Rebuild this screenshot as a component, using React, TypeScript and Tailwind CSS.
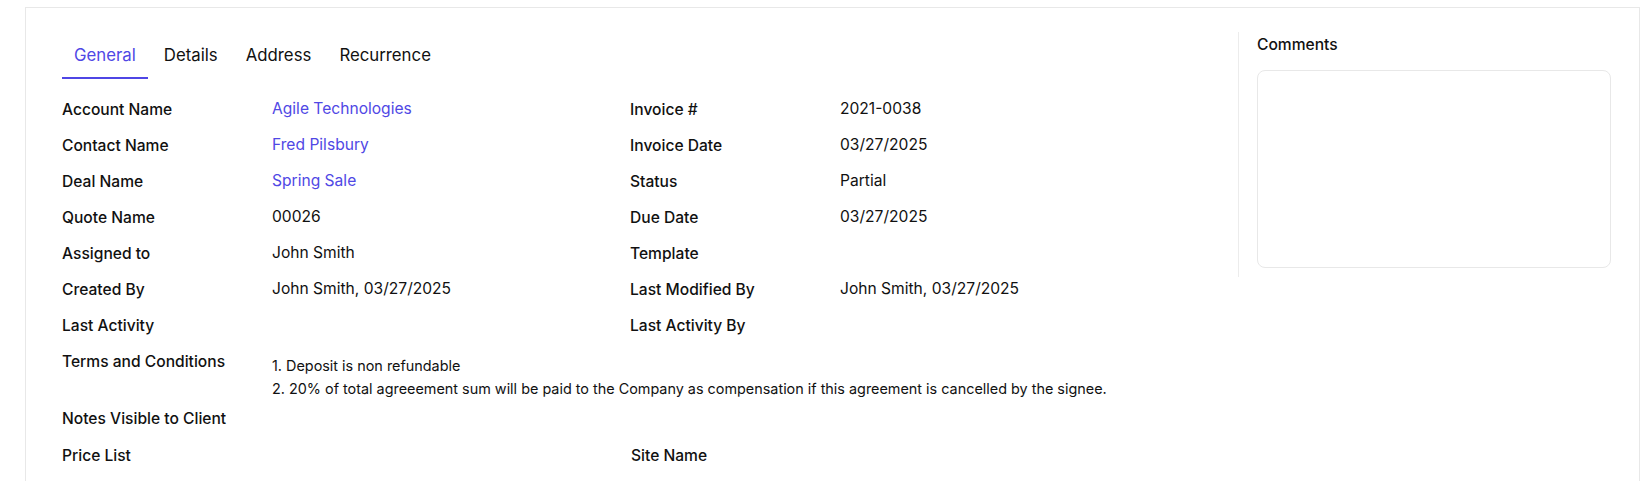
const tabs = ["General", "Details", "Address", "Recurrence"];

type Field = { label: string; value?: string; link?: boolean };

const rows: [Field, Field | null][] = [
  [{ label: "Account Name", value: "Agile Technologies", link: true }, { label: "Invoice #", value: "2021-0038" }],
  [{ label: "Contact Name", value: "Fred Pilsbury", link: true }, { label: "Invoice Date", value: "03/27/2025" }],
  [{ label: "Deal Name", value: "Spring Sale", link: true }, { label: "Status", value: "Partial" }],
  [{ label: "Quote Name", value: "00026" }, { label: "Due Date", value: "03/27/2025" }],
  [{ label: "Assigned to", value: "John Smith" }, { label: "Template" }],
  [{ label: "Created By", value: "John Smith, 03/27/2025" }, { label: "Last Modified By", value: "John Smith, 03/27/2025" }],
  [{ label: "Last Activity" }, { label: "Last Activity By" }]
];

function FieldCell({ field }: { field: Field | null }) {
  if (!field) return <div className="w-[568px]" />;
  return (
    <div className="flex w-[568px] items-center">
      <div className="w-[210px] text-[15.6px] font-medium leading-6 text-[#111111]">{field.label}</div>
      {field.value ? (
        <div
          className={
            "mb-[3px] text-[15.6px] leading-6 " + (field.link ? "text-[#5048e5]" : "text-[#111111]")
          }
        >
          {field.value}
        </div>
      ) : null}
    </div>
  );
}

export default function App() {
  return (
    <div
      className="min-h-screen bg-white pl-[25px] pt-[7px]"
      style={{ fontFamily: "Inter, 'Noto Sans', sans-serif" }}
    >
      <div className="flex h-[474px] w-[1615px] border border-b-0 border-[#e8e8e8]">
        {/* main */}
        <div className="w-[1212px] pl-[36px] pt-[22px]">
          <div className="flex gap-1">
            {tabs.map((t, i) => (
              <div
                key={t}
                className={
                  "px-3 pb-[10px] pt-[13px] text-[16.8px] leading-6 " +
                  (i === 0
                    ? "border-b-2 border-[#4f46e5] text-[#5048e5]"
                    : "border-b-2 border-transparent text-[#111111]")
                }
              >
                {t}
              </div>
            ))}
          </div>

          <div className="mt-[13px]">
            {rows.map(([a, b], i) => (
              <div key={i} className="flex h-[36px] items-center">
                <FieldCell field={a} />
                <FieldCell field={b} />
              </div>
            ))}

            <div className="flex pt-[6px]">
              <div className="w-[210px] text-[15.6px] font-medium leading-6 text-[#111111]">
                Terms and Conditions
              </div>
              <div className="mt-[4px] text-[14.4px] leading-[23px] text-[#111111]">
                <div>1. Deposit is non refundable</div>
                <div>
                  2. 20% of total agreeement sum will be paid to the Company as compensation if this agreement
                  is cancelled by the signee.
                </div>
              </div>
            </div>

            <div className="flex h-[37px] items-center pt-[1px]">
              <FieldCell field={{ label: "Notes Visible to Client" }} />
            </div>
            <div className="flex h-[38px] items-center">
              <FieldCell field={{ label: "Price List" }} />
              <div className="ml-[1px]">
                <FieldCell field={{ label: "Site Name" }} />
              </div>
            </div>
          </div>
        </div>

        {/* comments */}
        <div className="mt-[24px] h-[245px] w-[401px] border-l border-[#ececec] pl-[18px] pr-[28px]">
          <div className="pt-[1px] text-[15.6px] font-medium leading-6 text-[#111111]">Comments</div>
          <div className="mt-[13px] h-[198px] rounded-lg border border-[#e8e8e8]" />
        </div>
      </div>
    </div>
  );
}
